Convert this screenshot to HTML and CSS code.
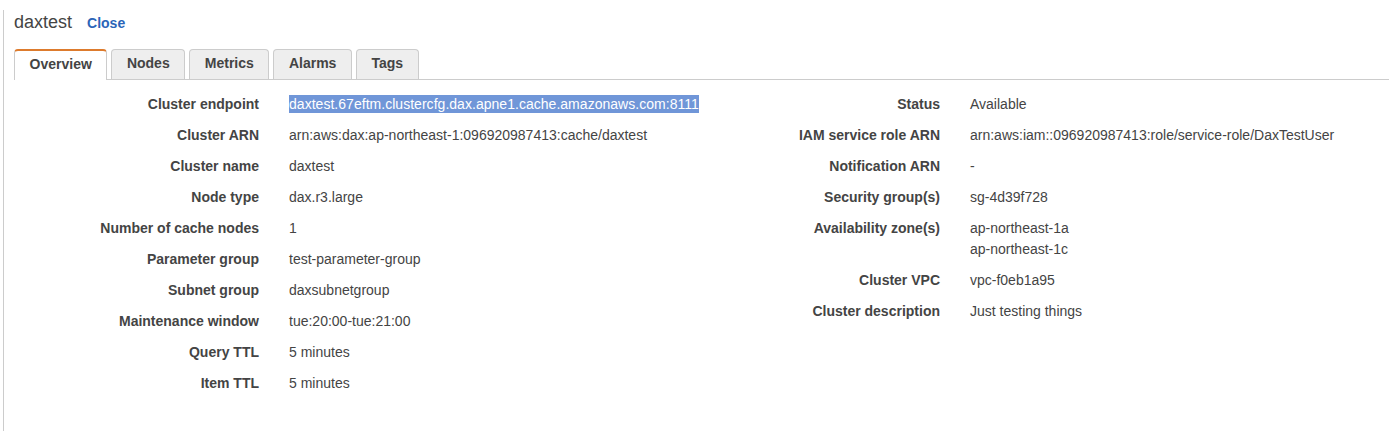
FILE: index.html
```html
<!DOCTYPE html>
<html>
<head>
<meta charset="utf-8">
<link rel="stylesheet" href="styles.css">
</head>
<body>
<div class="panel">
  <div class="header">
    <span class="title">daxtest</span>
    <a class="close">Close</a>
  </div>
  <div class="tabs">
    <div class="tab active">Overview</div>
    <div class="tab">Nodes</div>
    <div class="tab">Metrics</div>
    <div class="tab">Alarms</div>
    <div class="tab">Tags</div>
  </div>
  <div class="content">
    <div class="section">
      <div class="row"><div class="label">Cluster endpoint</div><div class="value"><span class="sel">daxtest.67eftm.clustercfg.dax.apne1.cache.amazonaws.com:8111</span></div></div>
      <div class="row"><div class="label">Cluster ARN</div><div class="value">arn:aws:dax:ap-northeast-1:096920987413:cache/daxtest</div></div>
      <div class="row"><div class="label">Cluster name</div><div class="value">daxtest</div></div>
      <div class="row"><div class="label">Node type</div><div class="value">dax.r3.large</div></div>
      <div class="row"><div class="label">Number of cache nodes</div><div class="value">1</div></div>
      <div class="row"><div class="label">Parameter group</div><div class="value">test-parameter-group</div></div>
      <div class="row"><div class="label">Subnet group</div><div class="value">daxsubnetgroup</div></div>
      <div class="row"><div class="label">Maintenance window</div><div class="value">tue:20:00-tue:21:00</div></div>
      <div class="row"><div class="label">Query TTL</div><div class="value">5 minutes</div></div>
      <div class="row"><div class="label">Item TTL</div><div class="value">5 minutes</div></div>
    </div>
    <div class="section">
      <div class="row"><div class="label">Status</div><div class="value">Available</div></div>
      <div class="row"><div class="label">IAM service role ARN</div><div class="value">arn:aws:iam::096920987413:role/service-role/DaxTestUser</div></div>
      <div class="row"><div class="label">Notification ARN</div><div class="value">-</div></div>
      <div class="row"><div class="label">Security group(s)</div><div class="value">sg-4d39f728</div></div>
      <div class="row"><div class="label">Availability zone(s)</div><div class="value">ap-northeast-1a<br>ap-northeast-1c</div></div>
      <div class="row"><div class="label">Cluster VPC</div><div class="value">vpc-f0eb1a95</div></div>
      <div class="row"><div class="label">Cluster description</div><div class="value">Just testing things</div></div>
    </div>
  </div>
</div>
</body>
</html>
```
FILE: styles.css
```css
html, body {
  margin: 0;
  padding: 0;
  background: #fff;
}
body {
  font-family: "Liberation Sans", Arial, sans-serif;
  color: #444;
  font-size: 14px;
}
.panel {
  margin-left: 3px;
  margin-top: 10px;
  border-left: 1px solid #ccc;
  padding-left: 10px;
  min-height: 421px;
  box-sizing: border-box;
}
.header {
  display: flex;
  align-items: baseline;
  gap: 15px;
  height: 26px;
  padding-top: 2px;
}
.title {
  font-size: 18px;
  color: #444;
}
.close {
  font-size: 14px;
  font-weight: bold;
  color: #2b64b8;
}
.tabs {
  display: flex;
  gap: 4px;
  margin-top: 11px;
  border-bottom: 1px solid #ccc;
  height: 30px;
}
.tab {
  height: 30px;
  box-sizing: border-box;
  padding: 0 14.55px;
  line-height: 27px;
  font-weight: bold;
  color: #444;
  background: #eee;
  border: 1px solid #ccc;
  border-bottom: none;
  border-radius: 4px 4px 0 0;
}
.tab.active {
  background: #fff;
  border-top: 2px solid #dd7b2d;
  height: 31px;
  line-height: 26px;
}
.content {
  display: flex;
  padding-top: 9px;
}
.section {
  width: 682px;
  flex: none;
}
.section + .section {
  width: auto;
}
.row {
  display: flex;
  gap: 30px;
  padding: 5px 0;
  line-height: 21px;
}
.label {
  width: 245px;
  flex: none;
  text-align: right;
  font-weight: bold;
}
.section + .section .label {
  width: 244px;
}
.value {
  white-space: nowrap;
}
.sel {
  background: #7096d8;
  color: #fff;
  padding: 1px 0;
  letter-spacing: 0.03px;
}
```
